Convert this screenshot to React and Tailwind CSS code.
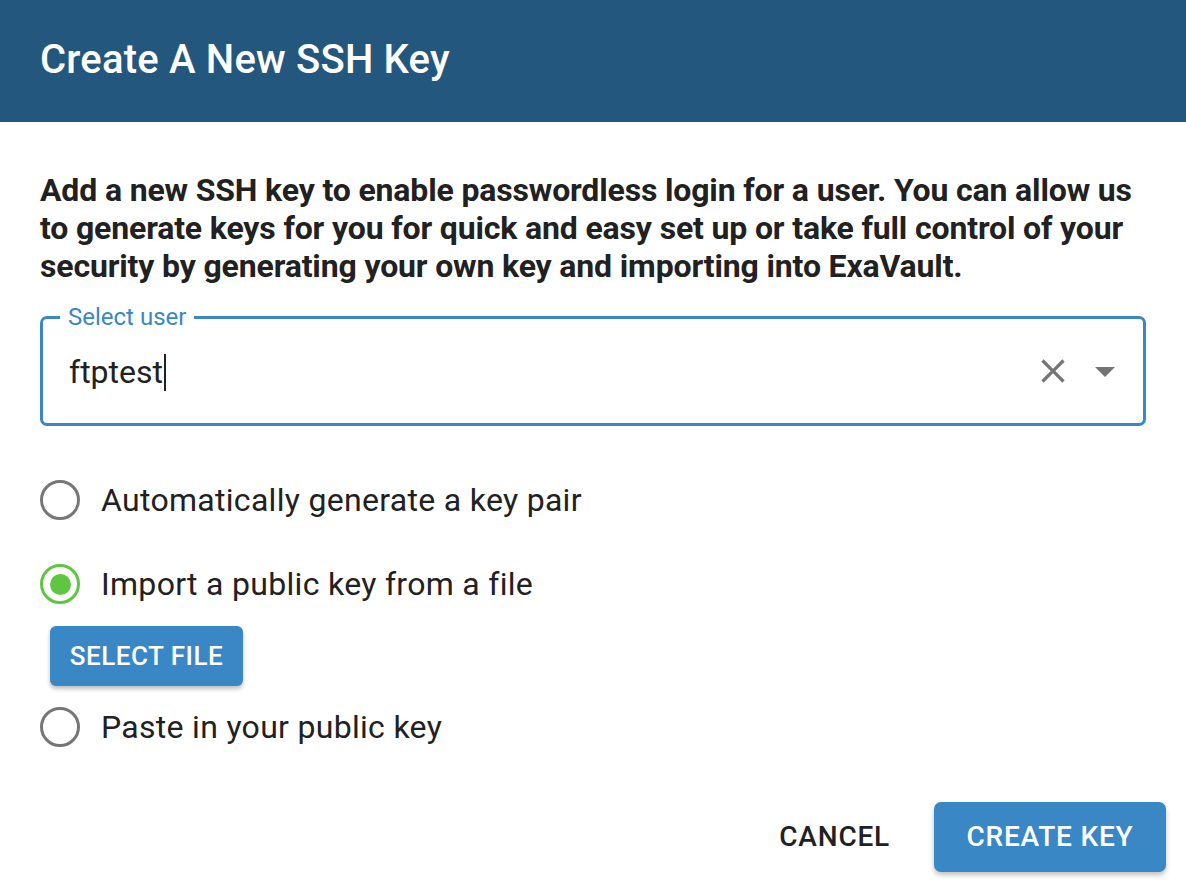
import React, { useState } from 'react';

function Radio({ checked, label, onClick }) {
  return (
    <div className="flex items-center cursor-pointer" onClick={onClick}>
      <span
        className={`w-[40px] h-[40px] rounded-full border-[3.5px] flex items-center justify-center shrink-0 ${
          checked ? 'border-[#5ec640]' : 'border-[#767676]'
        }`}
      >
        {checked && <span className="w-[21px] h-[21px] rounded-full bg-[#5ec640]" />}
      </span>
      <span className="ml-[21px] text-[32px] leading-none text-[#212121] tracking-[0.3px]">{label}</span>
    </div>
  );
}

export default function App() {
  const [mode, setMode] = useState('file');
  const [user, setUser] = useState('ftptest');

  return (
    <div className="w-[1186px] h-[882px] bg-white flex flex-col" style={{ fontFamily: 'Roboto, "Liberation Sans", sans-serif' }}>
      <div className="h-[122px] bg-[#23577e] flex items-center px-[40px] shrink-0">
        <h1 className="text-white text-[40px] font-medium leading-none pb-[2px] tracking-[0.2px]">Create A New SSH Key</h1>
      </div>

      <div className="flex flex-col px-[40px] pt-[49px]">
        <p className="text-[32px] font-bold leading-[38px] text-[#212121] tracking-[-0.15px]">
          Add a new SSH key to enable passwordless login for a user. You can allow us to generate keys for you for quick and easy set up or take full control of your security by generating your own key and importing into ExaVault.
        </p>

        <div className="relative mt-[31px] h-[110px] border-[3px] border-[#3a87c6] rounded-[7px] flex items-center pl-[26px] pr-[14px]">
          <span className="absolute -top-[17px] left-[17px] bg-white px-[8px] text-[24px] leading-[30px] text-[#3a87c6]">
            Select user
          </span>
          <div className="flex-1 flex items-center pt-[2px]">
            <span className="text-[32px] text-[#212121] leading-none">{user}</span>
            <span className="ml-[1px] w-[2px] h-[37px] bg-[#212121]" />
          </div>
          <button onClick={() => setUser('')} className="w-[44px] h-[44px] flex items-center justify-center text-[#757575]">
            <svg width="40" height="40" viewBox="0 0 24 24" fill="currentColor">
              <path d="M19 6.41 17.59 5 12 10.59 6.41 5 5 6.41 10.59 12 5 17.59 6.41 19 12 13.41 17.59 19 19 17.59 13.41 12z" />
            </svg>
          </button>
          <span className="ml-[6px] w-[48px] h-[48px] flex items-center justify-center text-[#757575]">
            <svg width="48" height="48" viewBox="0 0 24 24" fill="currentColor">
              <path d="M7 10l5 5 5-5z" />
            </svg>
          </span>
        </div>

        <div className="mt-[54px] flex flex-col">
          <Radio checked={mode === 'auto'} label="Automatically generate a key pair" onClick={() => setMode('auto')} />
          <div className="mt-[44px]">
            <Radio checked={mode === 'file'} label="Import a public key from a file" onClick={() => setMode('file')} />
          </div>
          <div className="pl-[10px] mt-[22px]">
            <button className="w-[193px] h-[60px] bg-[#3a87c6] text-white rounded-[6px] text-[26px] font-medium uppercase tracking-[0.5px] shadow-[0_3px_4px_rgba(0,0,0,0.25)]">
              Select File
            </button>
          </div>
          <div className="mt-[21px]">
            <Radio checked={mode === 'paste'} label="Paste in your public key" onClick={() => setMode('paste')} />
          </div>
        </div>
      </div>

      <div className="mt-auto mb-[10px] flex justify-end items-center pr-[20px]">
        <button className="px-[16px] h-[70px] text-[28px] font-medium uppercase tracking-[0.8px] text-[#212121] mr-[28px]">
          Cancel
        </button>
        <button className="w-[232px] h-[70px] bg-[#3a87c6] text-white rounded-[7px] text-[28px] font-medium uppercase tracking-[0.8px] shadow-[0_3px_5px_rgba(0,0,0,0.25)]">
          Create Key
        </button>
      </div>
    </div>
  );
}
